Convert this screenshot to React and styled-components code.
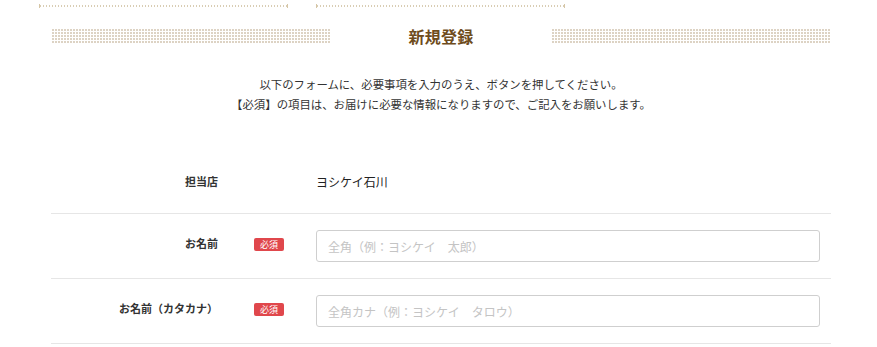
import React from "react";
import styled, { createGlobalStyle } from "styled-components";

const GlobalStyle = createGlobalStyle`
  html, body {
    margin: 0;
    padding: 0;
    background: #fff;
  }
  body {
    font-family: "Noto Sans CJK JP", "Noto Sans", sans-serif;
    color: #333;
  }
`;

const Page = styled.div`
  width: 877px;
  padding-top: 4px;
`;

const Steps = styled.div`
  display: flex;
  gap: 28px;
  padding-left: 39px;
`;

const Step = styled.div`
  width: 249px;
  height: 4px;
  border-left: 1px solid #d6c6a6;
  border-right: 1px solid #d6c6a6;
  box-sizing: border-box;
  background-image: repeating-linear-gradient(
    90deg,
    #d9cdb4 0 1px,
    transparent 1px 3px
  );
  background-size: 100% 2px;
  background-position: 0 1px;
  background-repeat: no-repeat;
`;

const Wrapper = styled.div`
  width: 780px;
  margin-left: 51px;
`;

const HeadingRow = styled.div`
  display: flex;
  align-items: center;
  margin-top: 20px;
  height: 16px;
`;

const Dots = styled.div`
  width: 280px;
  height: 16px;
  background-image: linear-gradient(#fff 1px, transparent 1px),
    linear-gradient(90deg, #fff 1px, #ddd3c4 1px);
  background-size: 3px 3px;
`;

const Heading = styled.h1`
  flex: 1;
  margin: 0;
  text-align: center;
  font-size: 16px;
  font-weight: 700;
  color: #6e4c1c;
  line-height: 16px;
  letter-spacing: 0.3px;
`;

const Intro = styled.p`
  margin: 30px 0 0;
  text-align: center;
  font-size: 11.4px;
  line-height: 20px;
  color: #333;
`;

const Form = styled.div`
  margin-top: 35px;
`;

const Row = styled.div`
  display: grid;
  grid-template-columns: 167px 98px 504px;
  align-items: center;
  padding: 16px 0;
  border-bottom: 1px solid #e6e6e6;
  min-height: 32px;
`;

const Label = styled.div`
  text-align: right;
  font-size: 11px;
  font-weight: 600;
  color: #333;
  margin-bottom: ${({ $raised }) => ($raised ? "6px" : "0")};
`;

const BadgeCell = styled.div`
  padding-left: 36px;
  margin-bottom: ${({ $raised }) => ($raised ? "4px" : "0")};
`;

const Badge = styled.span`
  display: block;
  width: 30px;
  height: 13px;
  line-height: 13px;
  border-radius: 2px;
  background: #e0474c;
  color: #fff;
  font-size: 9px;
  text-align: center;
`;

const Value = styled.div`
  font-size: 12px;
  color: #222;
`;

const Input = styled.input`
  box-sizing: border-box;
  width: 504px;
  height: 32px;
  border: 1px solid #cfcfcf;
  border-radius: 3px;
  padding: 0 11px;
  font-family: inherit;
  font-size: 12px;
  color: #333;
  outline: none;
  &::placeholder {
    color: #c4c4c4;
  }
`;

const fields = [
  { label: "お名前", placeholder: "全角（例：ヨシケイ　太郎）" },
  { label: "お名前（カタカナ）", placeholder: "全角カナ（例：ヨシケイ　タロウ）" },
];

export default function App() {
  return (
    <Page>
      <GlobalStyle />
      <Steps>
        <Step />
        <Step />
      </Steps>
      <Wrapper>
        <HeadingRow>
          <Dots />
          <Heading>新規登録</Heading>
          <Dots />
        </HeadingRow>
        <Intro>
          以下のフォームに、必要事項を入力のうえ、ボタンを押してください。
          <br />
          【必須】の項目は、お届けに必要な情報になりますので、ご記入をお願いします。
        </Intro>
        <Form>
          <Row>
            <Label>担当店</Label>
            <BadgeCell />
            <Value>ヨシケイ石川</Value>
          </Row>
          {fields.map((f) => (
            <Row key={f.label}>
              <Label $raised>{f.label}</Label>
              <BadgeCell $raised>
                <Badge>必須</Badge>
              </BadgeCell>
              <Input placeholder={f.placeholder} />
            </Row>
          ))}
        </Form>
      </Wrapper>
    </Page>
  );
}
